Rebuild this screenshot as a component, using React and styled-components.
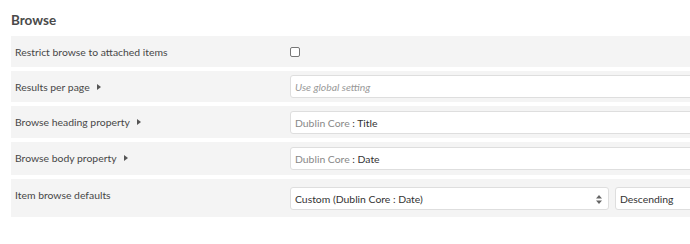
import styled, { createGlobalStyle } from "styled-components";

const Global = createGlobalStyle`
  body {
    margin: 0;
    background: #fff;
    font-family: Lato, "Open Sans", sans-serif;
    overflow: hidden;
  }
`;

const Page = styled.div`
  width: 760px;
  padding: 11px 0 0 11px;
`;

const Heading = styled.h2`
  margin: 0 0 7px;
  font-size: 13.5px;
  font-weight: 700;
  color: #4a4a4a;
  line-height: 18px;
`;

const Row = styled.div`
  display: flex;
  align-items: flex-start;
  background: #f4f4f4;
  min-height: ${(p) => p.$h}px;
  margin-bottom: 4px;
`;

const Label = styled.div`
  width: 279px;
  flex: none;
  box-sizing: border-box;
  padding: 9px 0 0 4px;
  font-size: 10.4px;
  line-height: 14px;
  color: #474747;
  display: flex;
  align-items: center;
`;

const Arrow = styled.span`
  display: inline-block;
  margin-left: 7px;
  width: 0;
  height: 0;
  border-top: 3.5px solid transparent;
  border-bottom: 3.5px solid transparent;
  border-left: 4px solid #555;
`;

const Field = styled.div`
  flex: 1;
  display: flex;
  gap: 6px;
  padding-top: ${(p) => p.$pt}px;
`;

const Box = styled.div`
  box-sizing: border-box;
  height: 23px;
  width: ${(p) => p.$w || "auto"};
  flex: ${(p) => (p.$w ? "none" : "1")};
  background: #fff;
  border: 1px solid #dedede;
  border-radius: 3px;
  padding: 0 4px;
  display: flex;
  align-items: center;
  font-size: 10.4px;
  color: #333;
  position: relative;
`;

const Placeholder = styled.span`
  font-style: italic;
  color: #999;
`;

const Muted = styled.span`
  color: #888;
`;

const Check = styled.span`
  display: block;
  margin-top: 11px;
  width: 8px;
  height: 8px;
  border: 1px solid #777;
  border-radius: 2px;
  background: #fff;
`;

const Spinner = styled.svg`
  position: absolute;
  right: 6px;
  top: 7px;
`;

export default function App() {
  return (
    <Page>
      <Global />
      <Heading>Browse</Heading>
      <Row $h={31}>
        <Label>Restrict browse to attached items</Label>
        <Field $pt={0}>
          <Check />
        </Field>
      </Row>
      <Row $h={31}>
        <Label>
          Results per page <Arrow />
        </Label>
        <Field $pt={4}>
          <Box>
            <Placeholder>Use global setting</Placeholder>
          </Box>
        </Field>
      </Row>
      <Row $h={32}>
        <Label>
          Browse heading property <Arrow />
        </Label>
        <Field $pt={5}>
          <Box>
            <Muted>Dublin Core</Muted>&nbsp;: Title
          </Box>
        </Field>
      </Row>
      <Row $h={33}>
        <Label>
          Browse body property <Arrow />
        </Label>
        <Field $pt={5}>
          <Box>
            <Muted>Dublin Core</Muted>&nbsp;: Date
          </Box>
        </Field>
      </Row>
      <Row $h={38}>
        <Label>Item browse defaults</Label>
        <Field $pt={8}>
          <Box $w="319px">
            Custom (Dublin Core : Date)
            <Spinner width="6" height="9" viewBox="0 0 6 9">
              <path d="M3 0L6 3.5H0z M3 9L0 5.5H6z" fill="#666" />
            </Spinner>
          </Box>
          <Box>Descending</Box>
        </Field>
      </Row>
    </Page>
  );
}
